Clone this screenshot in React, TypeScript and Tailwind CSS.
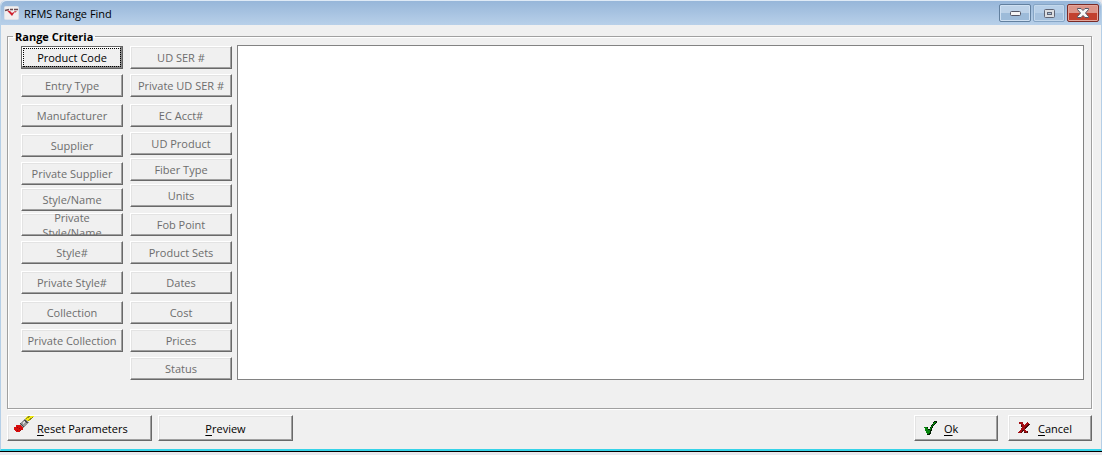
import React from 'react';
import clsx from 'clsx';

type Criterion = {
  label: string;
  space?: string;
};

const productCriteria: Criterion[] = [
  { label: 'Product Code' },
  { label: 'Entry Type', space: 'mt-[5px]' },
  { label: 'Manufacturer', space: 'mt-[7px]' },
  { label: 'Supplier', space: 'mt-[7px]' },
  { label: 'Private Supplier', space: 'mt-[5px]' },
  { label: 'Style/Name', space: 'mt-[3px]' },
  { label: 'Private Style/Name', space: 'mt-[2px]' },
  { label: 'Style#', space: 'mt-[5px]' },
  { label: 'Private Style#', space: 'mt-[7px]' },
  { label: 'Collection', space: 'mt-[7px]' },
  { label: 'Private Collection', space: 'mt-[5px]' },
];

const detailCriteria: Criterion[] = [
  { label: 'UD SER #' },
  { label: 'Private UD SER #', space: 'mt-[5px]' },
  { label: 'EC Acct#', space: 'mt-[7px]' },
  { label: 'UD Product', space: 'mt-[5px]' },
  { label: 'Fiber Type', space: 'mt-[3px]' },
  { label: 'Units', space: 'mt-[3px]' },
  { label: 'Fob Point', space: 'mt-[6px]' },
  { label: 'Product Sets', space: 'mt-[5px]' },
  { label: 'Dates', space: 'mt-[7px]' },
  { label: 'Cost', space: 'mt-[7px]' },
  { label: 'Prices', space: 'mt-[5px]' },
  { label: 'Status', space: 'mt-[5px]' },
];

// Raised 3D edge shared by the push buttons
const raised =
  'bg-[#f0f0f0] border border-t-white border-l-white border-r-[#696969] border-b-[#696969] shadow-[inset_-1px_-1px_0_#a0a0a0,inset_1px_1px_0_#e3e3e3]';

// Default button: dark frame with a dotted focus rectangle inside
const focused =
  'bg-[#f0f0f0] border border-[#646464] text-black shadow-[inset_-2px_-2px_0_#8a8a8a,inset_1px_1px_0_white] outline-1 -outline-offset-3 outline-dotted outline-black';

const CriteriaColumn = ({ items, active }: { items: Criterion[]; active?: string }) => (
  <div className="flex w-[102px] shrink-0 flex-col">
    {items.map(({ label, space }) => {
      const isActive = label === active;
      return (
        <button
          key={label}
          type="button"
          disabled={!isActive}
          className={clsx(
            'flex h-[23px] items-center justify-center overflow-hidden text-center text-[11px] leading-[15px]',
            space,
            isActive ? focused : [raised, 'text-[#6d6d6d]'],
          )}
        >
          <span className={label === 'Private Style/Name' ? 'w-16' : 'whitespace-nowrap'}>{label}</span>
        </button>
      );
    })}
  </div>
);

type ActionButtonProps = {
  label: string;
  icon?: React.ReactNode;
  className?: string;
};

const ActionButton = ({ label, icon, className }: ActionButtonProps) => (
  <button type="button" className={clsx('flex h-[26px] items-center text-[11px] leading-[15px]', raised, className)}>
    {icon}
    <span>
      <span className="underline underline-offset-2">{label[0]}</span>
      {label.slice(1)}
    </span>
  </button>
);

const AppIcon = () => (
  <svg width="15" height="14" viewBox="0 0 15 14" aria-hidden="true">
    <rect x="0.5" y="0.5" width="14" height="13" rx="1" fill="#f1eeee" stroke="#dde1e8" />
    <path d="M1 4.500l4-1M6 3.500h3M10 3.500h4" stroke="#6b4b50" strokeWidth="1.500" />
    <path d="M3 4.500l5 5.500 3-4.500-3 1.500-2-2z" fill="#cf1f2d" />
    <path d="M10 5h3l-2 2z" fill="#c95c65" />
  </svg>
);

const BrushIcon = () => (
  <svg width="20" height="17" viewBox="0 0 20 17" shapeRendering="crispEdges" aria-hidden="true">
    <path d="M10 3l4-3h6l-5 5-2 1z" fill="#f4ec10" />
    <path d="M12 3l4-3M14 5l5-4" stroke="#8d8920" fill="none" />
    <path d="M6 7l5-4 4 3-1 2-5 4-3-2z" fill="#9a9a9a" />
    <path d="M8 7l3-3 1 1-3 3z" fill="#dedede" />
    <path d="M6 7l4 4M10 4l4 3" stroke="#4a4a4a" fill="none" />
    <path d="M2 9h4l3 2v3H7v1H6v1H2v-1H1v-1H0v-3h2z" fill="#d90d0d" />
    <path d="M3 11h1v1H3zM5 12h1v1H5zM3 14h1v1H3zM6 14h1v1H6z" fill="#8d1010" />
  </svg>
);

const CheckIcon = () => (
  <svg width="13" height="14" viewBox="0 0 13 14" shapeRendering="crispEdges" aria-hidden="true">
    <path d="M1 6h3l1 3 5-9h3v1L9 6l-3 8H3z" fill="#001d00" />
    <path d="M0 6h3l2 4 5-9h2L8 6l-3 7H3z" fill="#05840b" />
  </svg>
);

const CrossIcon = () => (
  <svg width="12" height="12" viewBox="0 0 12 12" shapeRendering="crispEdges" aria-hidden="true">
    <path d="M3 1l4 9h3M11 2L7 6l-5 5" stroke="#4a0a0a" strokeWidth="2" fill="none" />
    <path d="M1 1h3l3 8 2 1M10 1L6 5l-5 6" stroke="#a40d12" strokeWidth="2" fill="none" />
  </svg>
);

const TitleBar = () => (
  <header className="flex h-[25px] items-center justify-between rounded-t-md border-t border-t-[#dfeaf6] bg-linear-to-b from-[#97b6d9] to-[#b8d0e9] pr-[2px] pl-[3px]">
    <div className="flex items-center gap-[5px]">
      <AppIcon />
      <h1 className="text-[11px] leading-[15px]">RFMS Range Find</h1>
    </div>
    <div className="flex gap-[2px]">
      <button
        type="button"
        aria-label="Minimize"
        className="flex h-[18px] w-8 items-center justify-center rounded-xs border border-[#62809f] bg-linear-to-b from-[#bdd2e8] from-50% to-[#9dbbd9] to-50% ring-1 ring-[#cfe0f2] ring-inset"
      >
        <svg width="11" height="5" viewBox="0 0 11 5" aria-hidden="true">
          <rect x="0.5" y="0.5" width="10" height="4" rx="1" fill="#f5f5f5" stroke="#535666" />
        </svg>
      </button>
      <button
        type="button"
        aria-label="Maximize"
        className="flex h-[18px] w-8 items-center justify-center rounded-xs border border-[#86a5c5] bg-linear-to-b from-[#b7cfe8] from-50% to-[#a5c1de] to-50% ring-1 ring-[#c4d8ec] ring-inset"
      >
        <svg width="11" height="9" viewBox="0 0 11 9" aria-hidden="true">
          <rect x="0.5" y="0.5" width="10" height="8" rx="1" fill="#dcdfe3" stroke="#606575" />
          <rect x="3.5" y="3.5" width="4" height="2" fill="#a9c3df" stroke="#606575" />
        </svg>
      </button>
      <button
        type="button"
        aria-label="Close"
        className="flex h-[18px] w-8 items-center justify-center rounded-xs border border-[#7a2a26] bg-linear-to-b from-[#dc9488] from-50% to-[#c2402e] to-50% ring-1 ring-[#e5a79c] ring-inset"
      >
        <svg width="12" height="10" viewBox="0 0 12 10" aria-hidden="true">
          <path d="M0.500 0.500h3.500l2 2 2-2h3.500v1L8.500 5l3 3.500v1H8l-2-2-2 2H0.500v-1l3-3.500-3-3.500z" fill="#f7f7f7" stroke="#535666" />
        </svg>
      </button>
    </div>
  </header>
);

export default function App() {
  return (
    <div className="min-h-screen bg-[#e9e9ee] font-['Open_Sans',sans-serif] text-black">
      <main className="border-b border-b-black">
        <div className="rounded-t-md border-x border-b-2 border-x-[#b5cfe7] border-b-[#35d3e8] bg-[#f0f0f0]">
          <TitleBar />
          <div className="pt-[4px] pr-[9px] pb-[8px] pl-[6px]">
            <fieldset className="border border-[#a0a0a0] pt-px pr-[7px] pb-[28px] pl-[13px] shadow-[1px_1px_0_white,inset_1px_1px_0_white]">
              <legend className="-ml-[8px] px-[2px] text-[11px] leading-[15px] font-bold">Range Criteria</legend>
              <div className="flex">
                <div className="flex gap-[7px] pt-px">
                  <CriteriaColumn items={productCriteria} active="Product Code" />
                  <CriteriaColumn items={detailCriteria} />
                </div>
                <div className="ml-[5px] flex-1 border border-[#828282] bg-white" />
              </div>
            </fieldset>
            <div className="mt-[6px] flex justify-between">
              <div className="flex gap-[6px]">
                <ActionButton
                  label="Reset Parameters"
                  className="w-[145px] gap-[3px] pl-[6px]"
                  icon={<span className="self-start"><BrushIcon /></span>}
                />
                <ActionButton label="Preview" className="w-[135px] justify-center" />
              </div>
              <div className="flex gap-[10px]">
                <ActionButton label="Ok" className="w-[84px] gap-[7px] pl-[9px]" icon={<CheckIcon />} />
                <ActionButton label="Cancel" className="w-[84px] gap-[8px] pl-[9px]" icon={<CrossIcon />} />
              </div>
            </div>
          </div>
        </div>
      </main>
    </div>
  );
}
